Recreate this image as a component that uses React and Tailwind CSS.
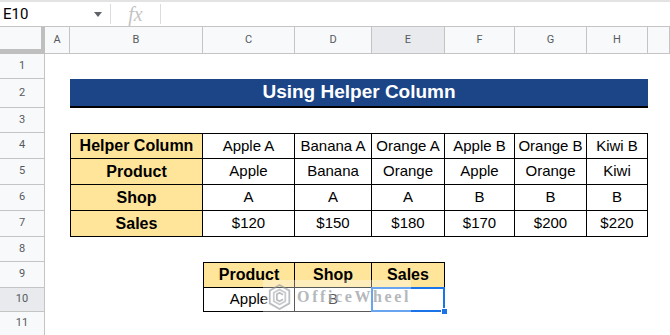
import React from "react";

const cols = ["A", "B", "C", "D", "E", "F", "G", "H", ""];
const rowNums = [1, 2, 3, 4, 5, 6, 7, 8, 9, 10, 11];

const t1 = [
  ["Helper Column", "Apple A", "Banana A", "Orange A", "Apple B", "Orange B", "Kiwi B"],
  ["Product", "Apple", "Banana", "Orange", "Apple", "Orange", "Kiwi"],
  ["Shop", "A", "A", "A", "B", "B", "B"],
  ["Sales", "$120", "$150", "$180", "$170", "$200", "$220"],
];

const t2 = [
  ["Product", "Shop", "Sales"],
  ["Apple", "B", ""],
];

function Table({ data, className, headerCol, headerRow }) {
  return (
    <div className={className}>
      {data.map((row, r) =>
        row.map((v, c) => {
          const isHead = (headerCol && c === 0) || (headerRow && r === 0);
          return (
            <div
              key={r + "-" + c}
              className={
                "flex items-center justify-center border-r border-b border-black whitespace-nowrap " +
                (c === 0 ? "border-l " : "") +
                (r === 0 ? "border-t " : "") +
                (isHead
                  ? "bg-[#ffe599] font-bold text-[16px] text-black"
                  : "bg-white text-[15px] text-black")
              }
            >
              {v}
            </div>
          );
        })
      )}
    </div>
  );
}

export default function App() {
  return (
    <div
      className="w-[670px] h-[335px] overflow-hidden bg-white relative"
      style={{ fontFamily: '"Liberation Sans", Arial, sans-serif' }}
    >
      {/* formula bar */}
      <div className="h-[27px] flex items-center border-t-2 border-t-[#e3e3e3] border-b border-b-[#c4c4c4] bg-white">
        <div className="w-[110px] flex items-center justify-between pl-[3px] pr-[8px] font-['Roboto',sans-serif] text-[15px] text-black">
          <span>E10</span>
          <svg width="8" height="5" viewBox="0 0 8 5">
            <path d="M0 0 L8 0 L4 5 Z" fill="#5f6368" />
          </svg>
        </div>
        <div className="w-px h-[20px] bg-[#dadce0]" />
        <div className="w-[49px] flex items-center justify-center font-['Liberation_Serif',serif] italic text-[20px] text-[#c4c4c4] leading-none">
          fx
        </div>
        <div className="w-px h-[20px] bg-[#dadce0]" />
        <div className="flex-1" />
      </div>

      {/* sheet grid */}
      <div className="grid grid-cols-[45px_25px_133px_92px_77px_73px_70px_72px_61px_1fr] grid-rows-[27px_25px_29px_25px_26px_26px_26px_26px_25px_26px_24px_24px] font-['Roboto',sans-serif]">
        {/* corner */}
        <div className="col-start-1 row-start-1 bg-[#f8f9fa] border-r-[4px] border-b-[5px] border-[#bfbfbf]" />
        {/* column headers */}
        {cols.map((c, i) => (
          <div
            key={"c" + i}
            className={
              "row-start-1 flex items-center justify-center border-r border-b border-[#c4c4c4] text-[11px] text-[#555a60] " +
              (c === "E" ? "bg-[#e8eaed]" : "bg-[#f8f9fa]")
            }
          >
            {c}
          </div>
        ))}
        {/* row headers */}
        {rowNums.map((n) => (
          <div
            key={"r" + n}
            className={
              "col-start-1 flex items-center justify-center border-r border-b border-[#c4c4c4] text-[11px] text-[#555a60] " +
              (n === 10 ? "bg-[#e8eaed]" : "bg-[#f8f9fa]")
            }
            style={{ gridRowStart: n + 1 }}
          >
            {n}
          </div>
        ))}

        {/* title */}
        <div className="col-start-3 col-span-7 row-start-3 bg-[#1c4587] border-b-2 border-black flex items-center justify-center text-white font-bold text-[19px] font-['Liberation_Sans',sans-serif]">
          Using Helper Column
        </div>

        {/* table 1 */}
        <Table
          data={t1}
          headerCol
          className="col-start-3 col-span-7 row-start-5 row-span-4 grid grid-cols-subgrid grid-rows-subgrid font-['Liberation_Sans',sans-serif]"
        />

        {/* table 2 */}
        <Table
          data={t2}
          headerRow
          className="col-start-4 col-span-3 row-start-10 row-span-2 grid grid-cols-subgrid grid-rows-subgrid font-['Liberation_Sans',sans-serif]"
        />

        {/* selection E10 */}
        <div className="col-start-6 row-start-11 relative">
          <div className="absolute left-[-1px] top-[-1px] right-0 bottom-0 border-2 border-[#1a73e8]" />
          <div className="absolute right-[-3px] bottom-[-3px] w-[7px] h-[7px] bg-[#1a73e8] border border-white" />
        </div>
      </div>

      {/* watermark */}
      <div className="absolute left-[263px] top-[280px] w-[148px] h-[33px] bg-white/35 flex items-center pointer-events-none">
        <svg width="26" height="30" viewBox="0 0 26 30" className="ml-[5px] opacity-60">
          <path d="M13 1.5 L24 7.8 L24 22.2 L13 28.5 L2 22.2 L2 7.8 Z" fill="none" stroke="#8e9399" strokeWidth="2" />
          <path d="M13 6.5 L19.5 10.3 L19.5 19.7 L13 23.5 L6.5 19.7 L6.5 10.3 Z" fill="none" stroke="#a4a8ad" strokeWidth="2" />
          <path d="M17 12.5 L13 10.2 L10 12 L10 18 L13 19.8 L17 17.5" fill="none" stroke="#8e9399" strokeWidth="2" />
        </svg>
        <span className="ml-[6px] font-['Liberation_Serif',serif] font-bold text-[16px] tracking-[2.6px] text-[#a3a7ab] opacity-80">
          OfficeWheel
        </span>
      </div>
    </div>
  );
}
